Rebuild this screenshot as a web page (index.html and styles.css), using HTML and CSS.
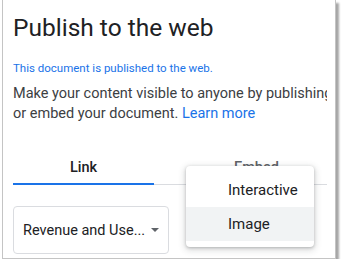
FILE: index.html
```html
<!DOCTYPE html>
<html lang="en">
<head>
    <meta charset="UTF-8">
    <title>Publish to the web</title>
    <link rel="stylesheet" href="styles.css">
</head>
<body>
    <div class="dialog">
        <div class="content">
            <h1 class="title">Publish to the web</h1>
            <div class="status">This document is published to the web.</div>
            <p class="desc">Make your content visible to anyone by publishing<br>or embed your document. <a href="#">Learn more</a></p>

            <div class="tabs">
                <div class="tab active">Link</div>
                <div class="tab">Embed</div>
            </div>

            <div class="controls">
                <div class="select">
                    <span class="select-text">Revenue and Use...</span>
                    <span class="caret"></span>
                </div>
            </div>
        </div>

        <div class="menu">
            <div class="menu-item">Interactive</div>
            <div class="menu-item selected">Image</div>
        </div>
    </div>
</body>
</html>
```

FILE: styles.css
```css
* {
    margin: 0;
    padding: 0;
    box-sizing: border-box;
}

body {
    font-family: Roboto, 'Noto Sans', sans-serif;
    background: #fff;
    color: #3c4043;
}

/* Dialog */
.dialog {
    position: relative;
    margin-left: 2px;
    width: 334px;
    height: 259px;
    border: 1px solid #c4c4c4;
    border-top: none;
    background: #fff;
    box-shadow: 3px 3px 2px rgba(0, 0, 0, 0.35);
    padding-left: 10px;
}

.content {
    width: 314px;
    overflow: hidden;
}

.title {
    padding-top: 14px;
    font-size: 24.5px;
    font-weight: 400;
    line-height: 28px;
    color: #202124;
}

.status {
    margin-top: 19px;
    font-size: 11.5px;
    line-height: 14px;
    color: #1a73e8;
}

.desc {
    margin-top: 9px;
    font-size: 14.5px;
    line-height: 20px;
    white-space: nowrap;
}

.desc a {
    color: #1a73e8;
    text-decoration: none;
}

/* Tabs */
.tabs {
    display: flex;
    margin-top: 34px;
    border-bottom: 1px solid #dadce0;
}

.tab {
    width: 142px;
    text-align: center;
    font-size: 14.5px;
    font-weight: 500;
    line-height: 20px;
    padding-bottom: 5px;
    color: #5f6368;
}

.tab:nth-child(2) {
    margin-left: 32px;
}

.tab.active {
    color: #202124;
    border-bottom: 2px solid #1a73e8;
    margin-bottom: -1px;
}

/* Select */
.controls {
    padding-top: 21px;
}

.select {
    width: 156px;
    height: 48px;
    border: 1px solid #dadce0;
    border-radius: 4px;
    display: flex;
    align-items: center;
    padding: 0 9px;
}

.select-text {
    flex-grow: 1;
    font-size: 14.5px;
    color: #202124;
}

.caret {
    width: 0;
    height: 0;
    border-left: 4px solid transparent;
    border-right: 4px solid transparent;
    border-top: 4px solid #5f6368;
}

/* Menu overlay */
.menu {
    position: absolute;
    left: 183px;
    top: 166px;
    width: 128px;
    padding: 7px 0 6px;
    background: #fff;
    border-radius: 4px;
    box-shadow: 0 1px 3px rgba(60, 64, 67, 0.3), 0 2px 6px 2px rgba(60, 64, 67, 0.15);
}

.menu-item {
    height: 34px;
    line-height: 34px;
    padding-left: 42px;
    font-size: 15px;
    color: #202124;
}

.menu-item.selected {
    background: #f1f3f4;
}
```
